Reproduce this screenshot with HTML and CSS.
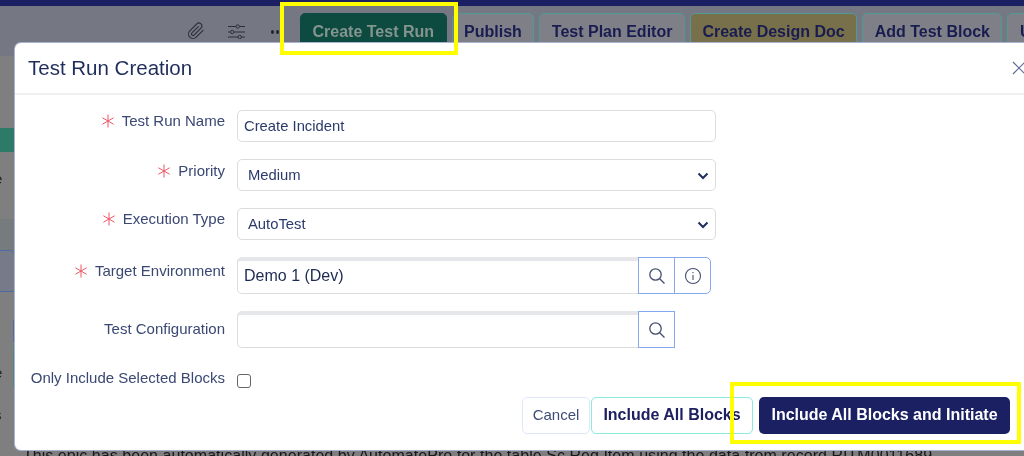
FILE: index.html
```html
<!DOCTYPE html>
<html lang="en">
<head>
<meta charset="utf-8">
<title>Test Run Creation</title>
<link rel="stylesheet" href="styles.css">
</head>
<body>
<div class="page">
  <div class="topbar"></div>
  <div class="toolbar">
    <svg class="tool-icon clip" width="18" height="18" viewBox="0 0 24 24" fill="none" stroke="#2c2f3a" stroke-width="1.500" stroke-linecap="round" stroke-linejoin="round"><path d="M21.440 11.050l-9.190 9.190a6 6 0 0 1-8.490-8.490l9.190-9.190a4 4 0 0 1 5.660 5.660l-9.200 9.190a2 2 0 0 1-2.830-2.830l8.490-8.480"/></svg>
    <svg class="tool-icon sliders" width="17" height="15" viewBox="0 0 17 15" fill="none" stroke="#2c2f3a" stroke-width="1"><path d="M0 2.500h8M11.500 2.500H17M0 8h2.500M6 8h11M0 13h10M13.500 13H17"/><circle cx="9.700" cy="2.500" r="1.700"/><circle cx="4.200" cy="8" r="1.700"/><circle cx="11.700" cy="13" r="1.700"/></svg>
    <span class="dots"><i></i><i></i><i></i></span>
    <button class="tbtn tbtn-primary">Create Test Run</button>
    <button class="tbtn">Publish</button>
    <button class="tbtn">Test Plan Editor</button>
    <button class="tbtn tbtn-gold">Create Design Doc</button>
    <button class="tbtn">Add Test Block</button>
    <button class="tbtn">Update</button>
  </div>
  <div class="content">
    <div class="side">
      <div class="side-block side-a"></div>
      <div class="side-block side-teal"></div>
      <div class="side-block side-gap1"></div>
      <div class="side-block side-b"><span>e</span></div>
      <div class="side-block side-gap2"></div>
      <div class="side-block side-band"></div>
      <div class="side-block side-tab"></div>
      <div class="side-block side-gap3"></div>
      <div class="side-block side-c"><span>r</span></div>
      <div class="side-block side-gap4"></div>
      <div class="side-block side-d"><span>e</span></div>
      <div class="side-block side-e"><span>s</span></div>
    </div>
    <div class="main">
      <p class="epic">This epic has been automatically generated by AutomatePro for the table Sc Req Item using the data from record RITM0011689.</p>
    </div>
  </div>

  <div class="modal">
    <header class="modal-head">
      <h2>Test Run Creation</h2>
      <svg class="close" width="14" height="14" viewBox="0 0 14 14" stroke="#5d6a93" stroke-width="1.200"><path d="M1 1l12 12M13 1L1 13"/></svg>
    </header>
    <form class="form">
      <div class="row row-name">
        <label class="lbl"><svg class="req" width="14" height="14" viewBox="0 0 14 14" stroke="#ee5565" stroke-width="1"><path d="M7 .5v13M1.400 3.750l11.200 6.500M12.600 3.750L1.400 10.250"/></svg>Test Run Name</label>
        <input class="field field-full" type="text" value="Create Incident">
      </div>
      <div class="row row-priority">
        <label class="lbl"><svg class="req" width="14" height="14" viewBox="0 0 14 14" stroke="#ee5565" stroke-width="1"><path d="M7 .5v13M1.400 3.750l11.200 6.500M12.600 3.750L1.400 10.250"/></svg>Priority</label>
        <div class="select-wrap">
          <select class="field field-full select"><option>Medium</option></select>
          <svg class="chev" width="12" height="8" viewBox="0 0 12 8" fill="none" stroke="#1e2f5f" stroke-width="2"><path d="M1.500 1.500L6 6l4.500-4.500"/></svg>
        </div>
      </div>
      <div class="row row-exec">
        <label class="lbl"><svg class="req" width="14" height="14" viewBox="0 0 14 14" stroke="#ee5565" stroke-width="1"><path d="M7 .5v13M1.400 3.750l11.200 6.500M12.600 3.750L1.400 10.250"/></svg>Execution Type</label>
        <div class="select-wrap">
          <select class="field field-full select"><option>AutoTest</option></select>
          <svg class="chev" width="12" height="8" viewBox="0 0 12 8" fill="none" stroke="#1e2f5f" stroke-width="2"><path d="M1.500 1.500L6 6l4.500-4.500"/></svg>
        </div>
      </div>
      <div class="row row-env">
        <label class="lbl"><svg class="req" width="14" height="14" viewBox="0 0 14 14" stroke="#ee5565" stroke-width="1"><path d="M7 .5v13M1.400 3.750l11.200 6.500M12.600 3.750L1.400 10.250"/></svg>Target Environment</label>
        <div class="group">
          <input class="field field-lookup field-dark" type="text" value="Demo 1 (Dev)">
          <button type="button" class="addon"><svg width="18" height="18" viewBox="0 0 18 18" fill="none" stroke="#44506f" stroke-width="1.300"><circle cx="7.500" cy="7.500" r="5.700"/><path d="M11.700 11.700L16.500 16.500"/></svg></button>
          <button type="button" class="addon addon-end"><svg width="18" height="18" viewBox="0 0 18 18" fill="none" stroke="#44506f" stroke-width="1.100"><circle cx="9" cy="9" r="7.500"/><path d="M9 8v5M9 5v1.300"/></svg></button>
        </div>
      </div>
      <div class="row row-config">
        <label class="lbl">Test Configuration</label>
        <div class="group">
          <input class="field field-lookup" type="text">
          <button type="button" class="addon addon-solo"><svg width="18" height="18" viewBox="0 0 18 18" fill="none" stroke="#44506f" stroke-width="1.300"><circle cx="7.500" cy="7.500" r="5.700"/><path d="M11.700 11.700L16.500 16.500"/></svg></button>
        </div>
      </div>
      <div class="row row-check">
        <label class="lbl">Only Include Selected Blocks</label>
        <span class="check"></span>
      </div>
      <div class="foot">
        <button type="button" class="fbtn fbtn-cancel">Cancel</button>
        <button type="button" class="fbtn fbtn-outline">Include All Blocks</button>
        <button type="button" class="fbtn fbtn-solid">Include All Blocks and Initiate</button>
      </div>
    </form>
  </div>

  <div class="mark mark-top"></div>
  <div class="mark mark-bottom"></div>
</div>
</body>
</html>
```

FILE: styles.css
```css
* { box-sizing: border-box; }
html, body { margin: 0; padding: 0; }
body { width: 1024px; height: 456px; overflow: hidden; font-family: "Liberation Sans", Arial, sans-serif; }
.page { position: relative; width: 1024px; height: 456px; overflow: hidden; background: #7f7f7f; display: flex; flex-direction: column; filter: blur(.35px); }

.topbar { height: 6px; background: #1b2063; flex: none; }
.toolbar { height: 50px; flex: none; margin-bottom: -13px; display: flex; align-items: flex-start; padding: 7px 0 0 187px; background: #757883; white-space: nowrap; }
.tool-icon { flex: none; }
.clip { margin: 9px 0 0; }
.sliders { margin: 11px 0 0 23px; }
.dots { display: flex; gap: 2px; margin: 17px 0 0 26px; width: 29px; flex: none; }
.dots i { width: 3px; height: 4px; flex: none; border-radius: 50%; background: #22242e; }
.tbtn { flex: none; height: 38px; margin-right: 5px; padding: 0 11.500px; border: 1px solid #4f9a94; border-radius: 5px; background: #7f8087; color: #191c50; font: bold 16px/36px "Liberation Sans", Arial, sans-serif; }
.tbtn-primary { background: #0d4a3f; border-color: #0d4a3f; color: #84948f; }
.tbtn-gold { background: #77704a; }

.content { flex: 1; display: flex; min-height: 0; }
.side { width: 15px; flex: none; overflow: hidden; display: flex; flex-direction: column; color: #25252a; font-size: 15px; line-height: 20px; }
.side-block { flex: none; border-right: 2px solid transparent; }
.side-block span { display: block; margin-left: -6px; }
.side-a { height: 85px; }
.side-teal { height: 24px; background: #2e7a69; }
.side-gap1 { height: 10px; }
.side-b { height: 41px; padding-top: 7px; border-right-color: #85807a; }
.side-gap2 { height: 16px; }
.side-band { height: 31px; background: #767b7d; }
.side-tab { height: 42px; background: #777b88; border: 1px solid #4e6ba6; border-left: 0; border-top-right-radius: 5px; }
.side-gap3 { height: 28px; }
.side-c { height: 22px; padding-top: 0; border-right-color: #4e6ba6; }
.side-gap4 { height: 3px; }
.side-d { height: 42px; padding-top: 18px; border-right-color: #4a8a80; }
.side-e { height: 40px; padding-top: 18px; }
.main { flex: 1; display: flex; flex-direction: column; justify-content: flex-end; padding-left: 8px; min-width: 0; overflow: hidden; }
.epic { margin: 0 0 -10px; font-size: 16px; line-height: 20px; letter-spacing: .04px; color: #17171c; white-space: nowrap; }

.modal { position: absolute; left: 15px; top: 43px; width: 1025px; height: 407px; background: #fff; border-radius: 6px; box-shadow: 0 0 0 1px #a9b4d3; color: #2b3a6b; }
.modal-head { height: 52px; display: flex; align-items: center; justify-content: space-between; padding: 0 14px 0 13px; border-bottom: 2px solid #f0f0f0; }
.modal-head h2 { margin: 0; font-weight: 400; font-size: 20.500px; color: #1f2d5c; }
.form { display: flex; flex-direction: column; gap: 17px; padding: 15px 0 0; }
.row { display: flex; align-items: flex-start; }
.lbl { width: 210px; flex: none; text-align: right; font-size: 15px; line-height: 20px; color: #3a4873; white-space: nowrap; }
.req { margin-right: 7px; vertical-align: -2px; }
.row-name .lbl { margin-top: 1px; }
.row-priority .lbl { margin-top: 2px; }
.row-exec .lbl { margin-top: 1px; }
.row-env .lbl { margin-top: 4px; }
.row-config .lbl { margin-top: 8px; }
.row-check .lbl { margin-top: 3px; }
.row-name, .row-priority, .row-exec { height: 32px; }
.row-env, .row-config { height: 37px; }
.row-check { height: 23px; }
.field { margin: 0 0 0 12px; height: 100%; border: 1px solid #dcdcdf; border-radius: 5px; background: #fff; padding: 0 6px; font: 14.800px "Liberation Sans", Arial, sans-serif; color: #2b3a6b; outline: 0; }
.field-full { width: 479px; }
.select-wrap { position: relative; height: 32px; }
.select { appearance: none; padding-left: 10px; }
.chev { position: absolute; right: 7px; top: 13px; }
.group { display: flex; height: 37px; }
.field-lookup { width: 402px; border-radius: 5px 0 0 5px; border-top: 4px solid #e6e7ea; }
.field-dark { font-size: 16px; color: #1d2a52; padding-bottom: 2px; }
.addon { width: 37px; height: 37px; margin-left: -1px; border: 1px solid #86a8ee; background: #fff; padding: 0; display: flex; align-items: center; justify-content: center; }
.addon-end { border-radius: 0 5px 5px 0; width: 37px; }
.check { width: 14px; height: 14px; margin: 9px 0 0 12px; border: 1px solid #666; border-radius: 3px; background: #fff; }
.foot { display: flex; padding-left: 507px; margin-top: -8px; }
.fbtn { height: 37px; border-radius: 5px; background: #fff; padding: 0 0 2px; font-family: "Liberation Sans", Arial, sans-serif; }
.fbtn-cancel { width: 68px; border: 1px solid #dfe8fb; color: #3f4c78; font-size: 15px; }
.fbtn-outline { width: 162px; margin-left: 1px; border: 1px solid #8aeadd; color: #1e2160; font-weight: 700; font-size: 16px; }
.fbtn-solid { width: 251px; margin-left: 6px; border: 0; background: #1b2063; color: #fff; font-weight: 700; font-size: 16px; }

.mark { position: absolute; border: 4px solid #ffff00; }
.mark-top { left: 280px; top: 2px; width: 178px; height: 53px; }
.mark-bottom { left: 730px; top: 382px; width: 291px; height: 62px; }
```
